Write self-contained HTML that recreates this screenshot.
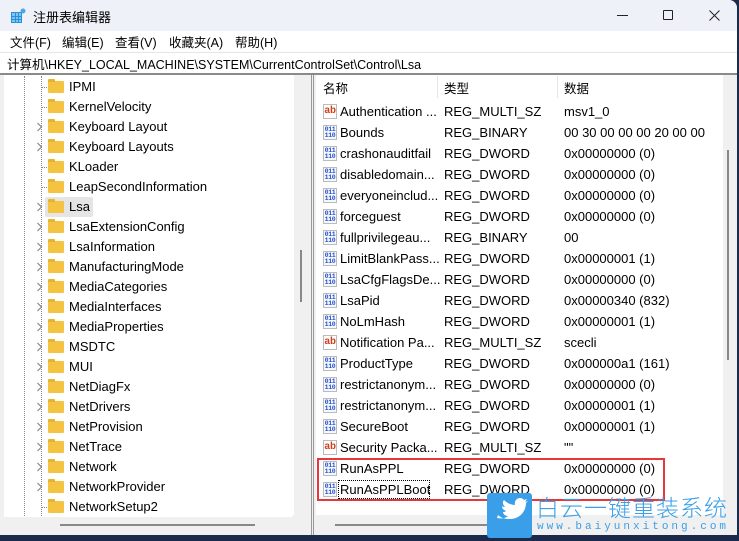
<!DOCTYPE html>
<html><head><meta charset="utf-8"><style>
*{margin:0;padding:0;box-sizing:border-box}
body{width:739px;height:538px;overflow:hidden;background:#1b2a4a;font-family:"Liberation Sans","Noto Sans CJK SC",sans-serif;font-size:13px;color:#000;position:relative}
.win{position:absolute;left:0;top:0;width:737px;height:535px;background:#f0f0f0;border-radius:0 8px 0 0;overflow:hidden}
.title{position:absolute;left:0;top:0;width:737px;height:31px;background:#eef2f8}
.title span{position:absolute;left:33px;top:7px;font-size:13px}
.menu{position:absolute;left:0;top:31px;width:737px;height:21px;background:#fff;font-size:12.5px}
.menu span{position:absolute;top:1px}
.addr{position:absolute;left:0;top:52px;width:737px;height:21px;background:#fff;border-top:1px solid #e5e5e5;font-size:12.5px;padding:1px 0 0 7px;white-space:nowrap}
.bar{position:absolute;left:0;top:73px;width:737px;height:2px;background:#8a8a8a}
.left{position:absolute;left:4px;top:75px;width:290px;height:442px;background:#fff;border-radius:0 0 4px 0}
.lsb{position:absolute;left:294px;top:75px;width:17px;height:442px;background:#f0f0f0}
.split{position:absolute;left:311px;top:75px;width:1px;height:460px;background:#999}
.split2{position:absolute;left:313px;top:75px;width:1px;height:460px;background:#999}
.right{position:absolute;left:316px;top:75px;width:407px;height:440px;background:#fff}
.rsb{position:absolute;left:723px;top:75px;width:13px;height:440px;background:#f0f0f0}
.row{position:absolute;height:20px;white-space:nowrap}
.fold{position:absolute;left:48px;width:16px;height:12px;background:#f5c342;border-radius:1px}
.fold:before{content:"";position:absolute;left:0;top:-2px;width:7px;height:3px;background:#e9b22f;border-radius:1px 1px 0 0}
.chev{position:absolute;left:36px}
.dl{position:absolute;border-left:1px dotted #888}
.ic{position:absolute;left:323px;width:14px;height:15px;border:1px solid #bbb;background:#f4f8ff;font-family:"Liberation Mono",monospace;font-weight:bold;color:#2a4fc8;font-size:6.5px;line-height:6px;text-align:center;padding-top:1px;letter-spacing:-0.3px}
.ic.ab{color:#d0401c;font-size:10px;line-height:12px;background:#fff}
</style></head><body>
<div class="win">
<div class="title">
<svg style="position:absolute;left:10px;top:8px" width="16" height="16"><rect x="1" y="4" width="11" height="11" fill="#2b8ed6"/><g fill="#7cc6f2"><rect x="2" y="5" width="3" height="3"/><rect x="6" y="5" width="2" height="3"/><rect x="9" y="5" width="2" height="3"/><rect x="2" y="9" width="3" height="2"/><rect x="6" y="9" width="2" height="2"/><rect x="9" y="9" width="2" height="2"/><rect x="2" y="12" width="3" height="2"/><rect x="6" y="12" width="2" height="2"/><rect x="9" y="12" width="2" height="2"/></g><circle cx="13" cy="3" r="2.5" fill="#4aa6e8"/></svg>
<span>注册表编辑器</span>
<div style="position:absolute;left:617px;top:15px;width:11px;height:1px;background:#222"></div>
<div style="position:absolute;left:663px;top:10px;width:10px;height:10px;border:1px solid #222;border-radius:1px"></div>
<svg style="position:absolute;left:709px;top:10px" width="11" height="11"><path d="M0.5 0.5L10.5 10.5M10.5 0.5L0.5 10.5" stroke="#222" stroke-width="1"/></svg>
</div>
<div class="menu"><span style="left:10px">文件(F)</span><span style="left:62px">编辑(E)</span><span style="left:115px">查看(V)</span><span style="left:169px">收藏夹(A)</span><span style="left:235px">帮助(H)</span></div>
<div class="addr">计算机\HKEY_LOCAL_MACHINE\SYSTEM\CurrentControlSet\Control\Lsa</div>
<div class="bar"></div>
<div class="left"></div>
<div class="lsb"><div style="position:absolute;left:6px;top:175px;width:2px;height:52px;background:#888"></div></div>
<div style="position:absolute;left:60px;top:524px;width:195px;height:2px;background:#888"></div>
<div class="split"></div><div class="split2"></div>
<div class="right"></div>
<div class="rsb"><div style="position:absolute;left:4px;top:75px;width:2px;height:210px;background:#888"></div></div>
<div style="position:absolute;left:335px;top:524px;width:160px;height:2px;background:#888"></div>
<div class="dl" style="left:24px;top:76px;height:440px"></div>
<div class="dl" style="left:41px;top:76px;height:440px"></div>
<div style="position:absolute;top:197px;height:20px;background:#e5e5e5;left:45px;width:48px;border-radius:2px"></div>
<div id="tree"></div>
<div style="position:absolute;left:323px;top:78px;font-size:12.5px">名称</div>
<div style="position:absolute;left:444px;top:78px;font-size:12.5px">类型</div>
<div style="position:absolute;left:564px;top:78px;font-size:12.5px">数据</div>
<div style="position:absolute;left:437px;top:76px;width:1px;height:22px;background:#e5e5e5"></div>
<div style="position:absolute;left:557px;top:76px;width:1px;height:22px;background:#e5e5e5"></div>
<div id="vals"></div>
<div style="position:absolute;left:317px;top:458px;width:348px;height:43px;border:2px solid #e8373a"></div>
<div style="position:absolute;left:338px;top:480px;width:92px;height:19px;border:1px dotted #000"></div>
</div>
<div style="position:absolute;left:487px;top:493px;width:45px;height:45px;background:#3a9fe8;border-radius:3px"><svg width="45" height="45"><path d="M10 25c5 1 9 0 11-2-3 0-5-2-5-4 1 0 2 0 3-1-3-1-4-3-4-5 1 1 2 1 3 1-2-2-3-5-1-7 3 3 7 5 11 5-1-4 2-7 5-7 2 0 3 1 4 2l3-1-2 3 3-1-2 2c0 8-6 16-16 16-5 0-9-1-12-4z" fill="#fff"/></svg></div>
<div style="position:absolute;left:536px;top:493px;font-size:23px;color:#3a9fe8;font-family:'Noto Sans CJK SC',sans-serif;font-weight:300;line-height:26px;letter-spacing:1px">白云一键重装系统</div>
<div style="position:absolute;left:537px;top:521px;font-size:11px;color:#3a9fe8;letter-spacing:3px;font-family:'Liberation Mono',monospace">www.baiyunxitong.com</div>
<script>
var t=["IPMI","KernelVelocity","Keyboard Layout","Keyboard Layouts","KLoader","LeapSecondInformation","Lsa","LsaExtensionConfig","LsaInformation","ManufacturingMode","MediaCategories","MediaInterfaces","MediaProperties","MSDTC","MUI","NetDiagFx","NetDrivers","NetProvision","NetTrace","Network","NetworkProvider","NetworkSetup2"];
var nc={0:1,1:1,4:1,5:1,21:1};var h="";
t.forEach(function(n,i){var y=77+i*20;
h+='<div class="fold" style="top:'+(y+4)+'px"></div><div class="row" style="left:69px;top:'+(y+2)+'px">'+n+'</div>';
if(nc[i])h+='<div class="dl" style="left:42px;top:'+(y+10)+'px;width:5px;height:0;border-left:0;border-top:1px dotted #888"></div>';
else h+='<svg class="chev" style="top:'+(y+5)+'px" width="8" height="10"><path d="M1.5 1L5.5 5L1.5 9" fill="none" stroke="#888" stroke-width="1.2"/></svg>';});
document.getElementById("tree").innerHTML=h;
var v=[["ab","Authentication ...","REG_MULTI_SZ","msv1_0"],["b","Bounds","REG_BINARY","00 30 00 00 00 20 00 00"],["b","crashonauditfail","REG_DWORD","0x00000000 (0)"],["b","disabledomain...","REG_DWORD","0x00000000 (0)"],["b","everyoneinclud...","REG_DWORD","0x00000000 (0)"],["b","forceguest","REG_DWORD","0x00000000 (0)"],["b","fullprivilegeau...","REG_BINARY","00"],["b","LimitBlankPass...","REG_DWORD","0x00000001 (1)"],["b","LsaCfgFlagsDe...","REG_DWORD","0x00000000 (0)"],["b","LsaPid","REG_DWORD","0x00000340 (832)"],["b","NoLmHash","REG_DWORD","0x00000001 (1)"],["ab","Notification Pa...","REG_MULTI_SZ","scecli"],["b","ProductType","REG_DWORD","0x000000a1 (161)"],["b","restrictanonym...","REG_DWORD","0x00000000 (0)"],["b","restrictanonym...","REG_DWORD","0x00000001 (1)"],["b","SecureBoot","REG_DWORD","0x00000001 (1)"],["ab","Security Packa...","REG_MULTI_SZ","\"\""],["b","RunAsPPL","REG_DWORD","0x00000000 (0)"],["b","RunAsPPLBoot","REG_DWORD","0x00000000 (0)"]];
h="";v.forEach(function(r,i){var y=104+i*21;
h+='<div class="ic'+(r[0]=="ab"?' ab':'')+'" style="top:'+(y)+'px">'+(r[0]=="ab"?'ab':'011<br>110')+'</div>';
h+='<div class="row" style="left:340px;top:'+y+'px">'+r[1]+'</div><div class="row" style="left:444px;top:'+y+'px">'+r[2]+'</div><div class="row" style="left:564px;top:'+y+'px">'+r[3]+'</div>';});
document.getElementById("vals").innerHTML=h;
</script>
</body></html>
